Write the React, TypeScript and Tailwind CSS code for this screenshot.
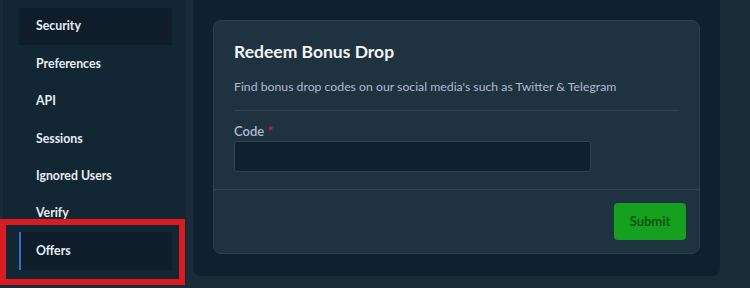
const items = ['Security', 'Preferences', 'API', 'Sessions', 'Ignored Users', 'Verify', 'Offers']

export default function App() {
  return (
    <div
      className="relative flex h-[288px] w-[750px] overflow-hidden bg-[#1a2c38]"
      style={{ fontFamily: 'Lato, "Open Sans", sans-serif' }}
    >
      {/* sidebar */}
      <div className="ml-[3px] h-[282px] w-[183px] rounded-b-md bg-[#132634] pl-[16px] pr-[14px] pt-[8px]">
        {items.map((item) => {
          const active = item === 'Security' || item === 'Offers'
          return (
            <div
              key={item}
              className={`relative flex h-[37.4px] items-center pl-[17px] text-[12.3px] font-bold text-[#e6edf3] ${
                active ? 'bg-[#0e1d29]' : ''
              }`}
            >
              {item === 'Offers' && (
                <span className="absolute left-0 top-0 h-full w-[2px] bg-[#3a6fc4]" />
              )}
              {item}
            </div>
          )
        })}
      </div>

      {/* content */}
      <div className="ml-[7px] h-[276px] w-[527px] rounded-b-lg bg-[#0f212e] p-[20px]">
        <div className="h-[234px] rounded-lg border border-[#2a3f4d] bg-[#1f3240]">
          <div className="px-[20px] pt-[19px]">
            <h3 className="text-[17.5px] font-bold leading-[24px] text-[#f1f5f8]">Redeem Bonus Drop</h3>
            <p className="mt-[13px] border-b border-[#2f4553] pb-[13px] text-[12.25px] leading-[20px] text-[#b1bad3]">
              Find bonus drop codes on our social media's such as Twitter &amp; Telegram
            </p>
            <label className="mt-[10px] block text-[13px] font-semibold leading-[20px] text-[#b1bad3]">
              Code <span className="text-[#e9113c]">*</span>
            </label>
            <input className="h-[31px] w-[357px] rounded-[3px] border border-[#2f4553] bg-[#0f212e] px-2 text-sm text-white outline-none" />
          </div>
          <div className="mt-[17px] flex justify-end border-t border-[#2f4553] px-[13px] pt-[13px]">
            <button className="h-[37px] w-[72px] rounded-[4px] bg-[#15a020] text-[13px] font-bold text-[#07560e]">
              Submit
            </button>
          </div>
        </div>
      </div>

      {/* highlight box */}
      <div className="absolute left-0 top-[219px] h-[66px] w-[185px] border-[6px] border-[#d91c22]" />
    </div>
  )
}
